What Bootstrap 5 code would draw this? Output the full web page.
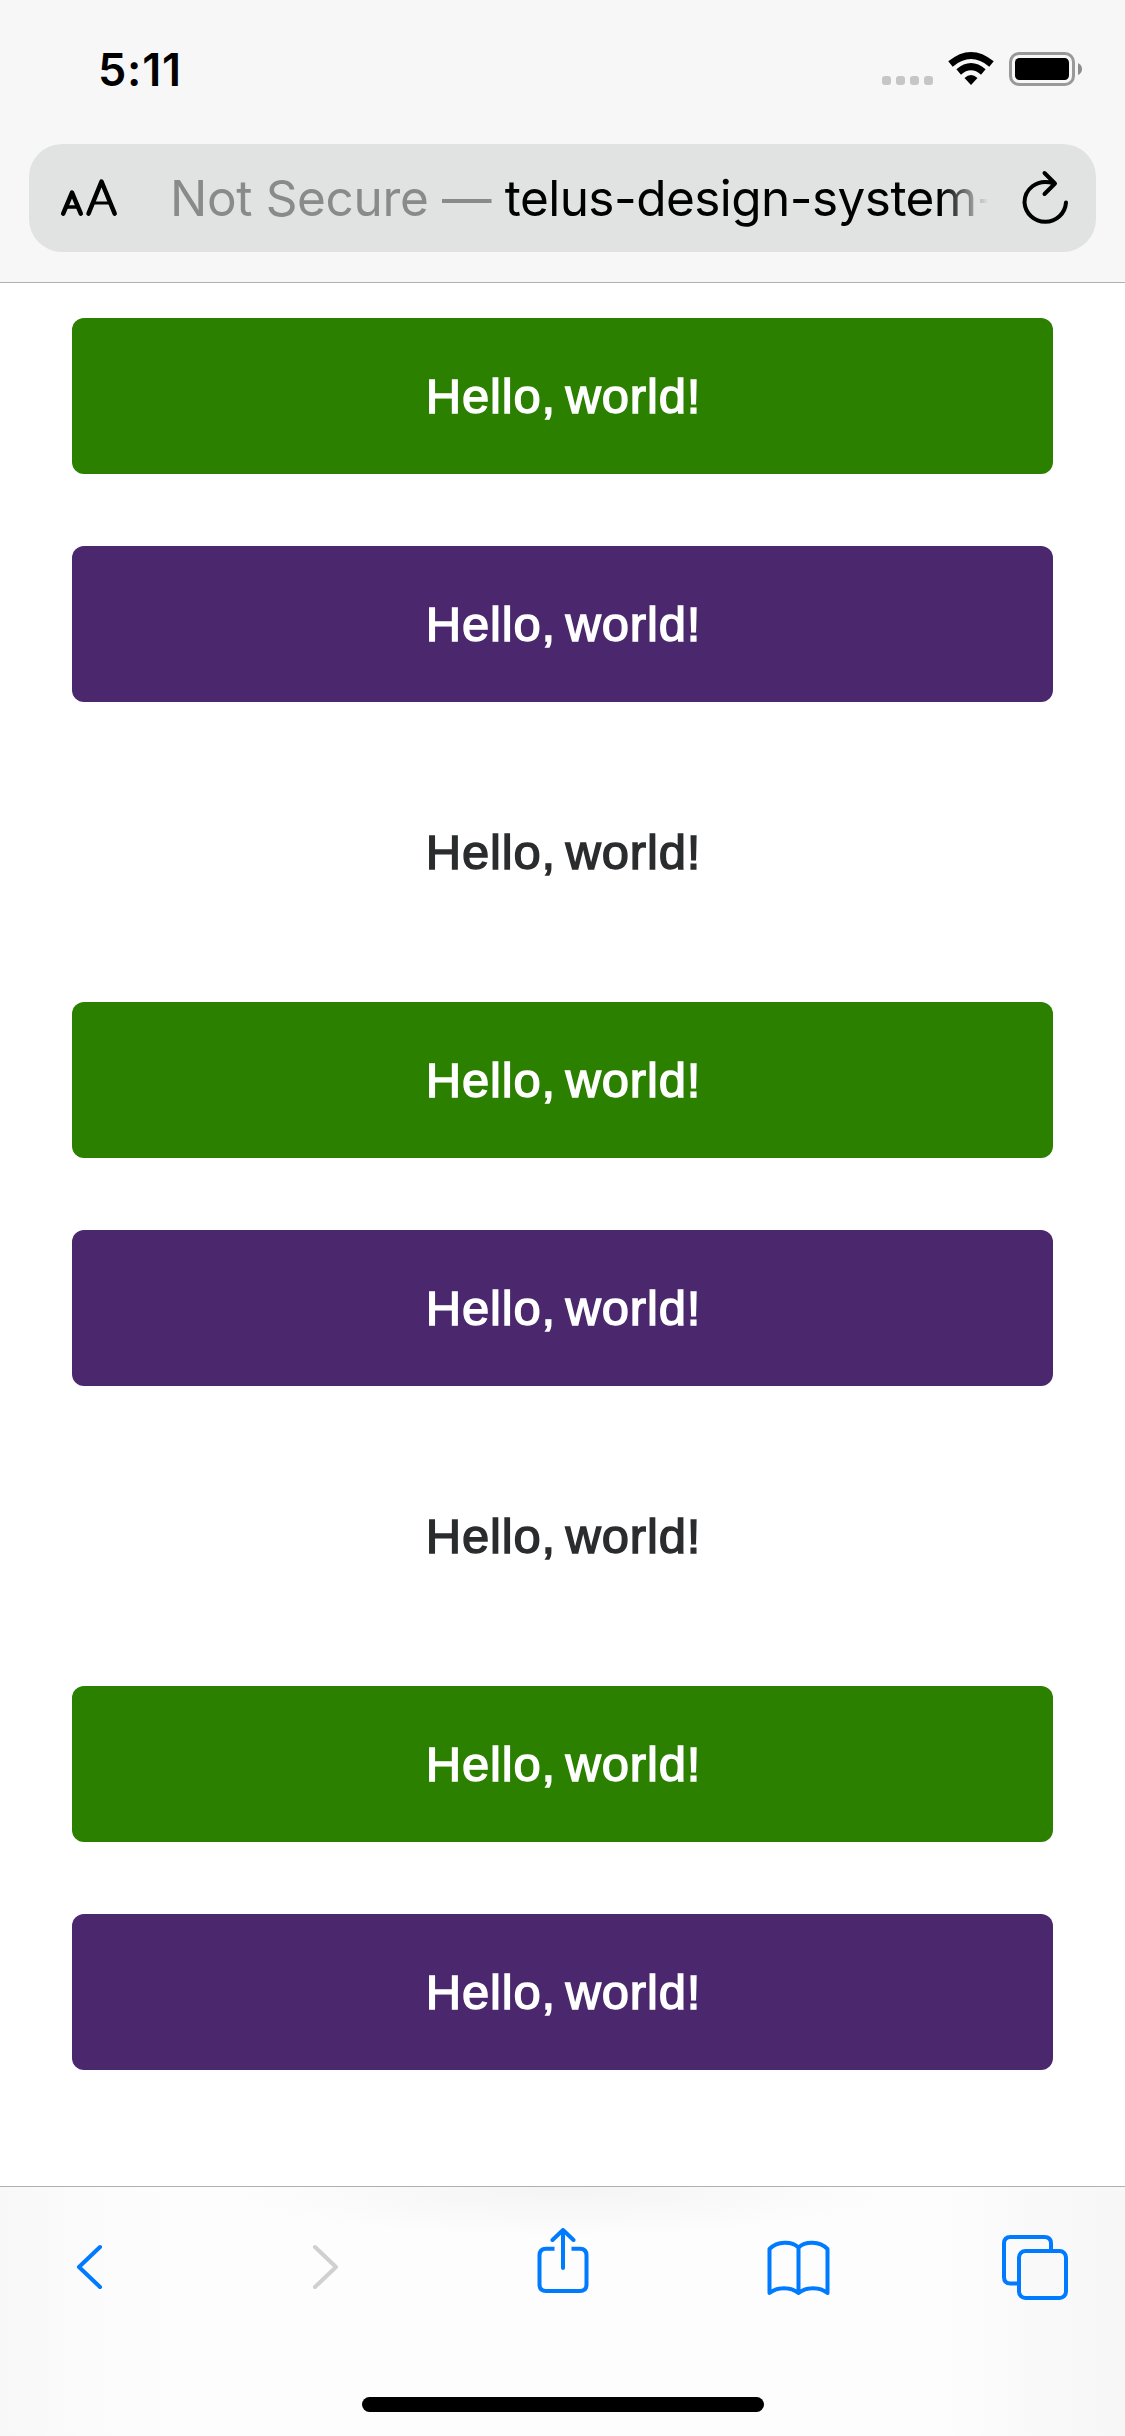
<!DOCTYPE html>
<html lang="en">
<head>
<meta charset="utf-8">
<meta name="viewport" content="width=device-width, initial-scale=1">
<title>Buttons</title>
<link href="https://cdn.jsdelivr.net/npm/bootstrap@5.3.0/dist/css/bootstrap.min.css" rel="stylesheet">
<style>
  body { font-family: Inter, "Liberation Sans", sans-serif; height: 2436px; overflow: hidden; }
  .top-chrome { background: #f7f7f7; height: 283px; border-bottom: 1px solid #aeb0b2; padding: 0 29px; }
  .status-row { height: 144px; padding: 0 13px 6px 69px; }
  .clock { font-size: 45px; font-weight: 600; line-height: 1; letter-spacing: .8px; }
  .address { background: #e1e3e2; height: 108px; border-radius: 33px; padding: 0 22px 0 31px; }
  .url { font-size: 49.5px; line-height: 108px; width: 842px; margin-left: 52px; white-space: pre;
    -webkit-mask-image: linear-gradient(90deg, #000 772px, transparent 818px); mask-image: linear-gradient(90deg, #000 772px, transparent 818px); }
  .url .host { color: #000; letter-spacing: -.55px; }
  .url .insecure { color: #8a8a8a; letter-spacing: -.35px; }
  .stack { padding: 35px 72px 0; gap: 72px; }
  .ds-btn { height: 156px; border: 0; border-radius: 12px; font: 400 49px/1 "Liberation Sans", sans-serif; letter-spacing: .85px; word-spacing: -5px; -webkit-text-stroke: 1.4px currentColor; padding: 1px 0 0 2px; color: #fff; }
  .ds-primary { background: #2b8000; }
  .ds-secondary { background: #4b286d; }
  .ds-plain { background: #fff; color: #2a2c2e; }
  .bottom-chrome { height: 250px; border-top: 1px solid #aeb0b2; padding: 41px 54px 0;
    background: radial-gradient(ellipse 330px 50px at 50% 0, #f4f4f4, transparent), linear-gradient(90deg, #f8f8f8, #fbfbfb 8%, #fdfdfd 15%, #fdfdfd 84%, #fafafa 90%, #f7f7f7); }
  .bottom-chrome svg { fill: none; stroke: #007aff; stroke-width: 4; stroke-linecap: round; stroke-linejoin: round; }
  .bottom-chrome svg.disabled-icon { stroke: #d0d0d0; }
  .bottom-chrome .butt { stroke-linecap: butt; }
  .home-bar { width: 402px; height: 15px; margin-top: 97px; }
</style>
</head>
<body class="d-flex flex-column bg-white">
<header class="top-chrome flex-shrink-0">
  <div class="status-row d-flex align-items-center justify-content-between">
    <span class="clock text-black">5:11</span>
    <svg width="202" height="40" viewBox="881 49 202 40">
      <g fill="#c6c6c6"><rect x="882" y="76" width="9" height="9" rx="3"/><rect x="896" y="76" width="9" height="9" rx="3"/><rect x="910" y="76" width="9" height="9" rx="3"/><rect x="924" y="76" width="9" height="9" rx="3"/></g>
      <g fill="none" stroke="#000" stroke-width="7"><path d="M950.5 64 Q971 47 991.5 64"/><path d="M958.7 72 Q971 61.300 983.300 72"/></g>
      <path d="M964.500 78 Q971 72 977.500 78 L971 85Z"/>
      <rect x="1010.500" y="53.500" width="63" height="31" rx="8.500" fill="none" stroke="#999" stroke-width="3"/>
      <rect x="1015" y="58" width="54" height="22" rx="4.500"/>
      <path d="M1078 63 Q1082 65 1082 69 Q1082 73 1078 75Z" fill="#8c8c8c"/>
    </svg>
  </div>
  <div class="address d-flex align-items-center">
    <svg class="flex-shrink-0" width="58" height="40" viewBox="60 178 58 40" fill="none" stroke="#000" stroke-linecap="round" stroke-linejoin="round"><path stroke-width="4.500" d="M63.200 213.700L72 192.700L80.800 213.700"/><path stroke-width="3.500" d="M67 207H77"/><path stroke-width="4.500" d="M88.500 213.700L101.500 181.500L114.700 213.700"/><path stroke-width="3" d="M93 203H110.500"/></svg>
    <div class="url flex-shrink-0"><span class="insecure">Not Secure — </span><span class="host">telus-design-system-</span></div>
    <svg class="flex-shrink-0 ms-auto" width="54" height="60" viewBox="1020 168 54 60" fill="none" stroke="#000" stroke-width="4" stroke-linecap="round" stroke-linejoin="round"><path d="M1053.500 183.200C1036 178 1024.500 190 1024.500 202.500A20.800 20.800 0 0 0 1066 202.500M1044.500 173L1055 183.500L1044.500 194"/></svg>
  </div>
</header>
<main class="stack d-flex flex-column flex-grow-1">
  <button class="btn ds-btn ds-primary" type="button">Hello, world!</button>
  <button class="btn ds-btn ds-secondary" type="button">Hello, world!</button>
  <button class="btn ds-btn ds-plain" type="button">Hello, world!</button>
  <button class="btn ds-btn ds-primary" type="button">Hello, world!</button>
  <button class="btn ds-btn ds-secondary" type="button">Hello, world!</button>
  <button class="btn ds-btn ds-plain" type="button">Hello, world!</button>
  <button class="btn ds-btn ds-primary" type="button">Hello, world!</button>
  <button class="btn ds-btn ds-secondary" type="button">Hello, world!</button>
</main>
<footer class="bottom-chrome flex-shrink-0">
  <nav class="d-flex justify-content-between">
    <svg width="72" height="72" viewBox="54 2228 72 72"><path d="M100 2247L79 2267L100 2287"/></svg>
    <svg class="disabled-icon" width="72" height="72" viewBox="290 2228 72 72"><path d="M315 2247L336 2267L315 2287"/></svg>
    <svg width="72" height="72" viewBox="526.500 2228 72 72"><path class="butt" d="M554 2248.800H545.500Q539 2248.800 539 2255.500V2284.500Q539 2291 545.500 2291H579.500Q586 2291 586 2284.500V2255.500Q586 2248.800 579.500 2248.800H571"/><path d="M562.500 2268V2230.500M552 2240L562.500 2230L573 2240"/></svg>
    <svg width="72" height="72" viewBox="762.500 2228 72 72"><path d="M798 2247.500C791 2241 777 2241 769 2249V2293C777 2286.500 790 2286.500 798 2293C806 2286.500 819 2286.500 827 2293V2249C819 2241 805 2241 798 2247.500V2293"/></svg>
    <svg width="72" height="72" viewBox="999 2228 72 72"><path d="M1017 2283.500H1010.500Q1004 2283.500 1004 2277V2243.500Q1004 2237 1010.500 2237H1044.500Q1051 2237 1051 2243.500V2250"/><rect x="1019" y="2251" width="47" height="47" rx="6.500"/></svg>
  </nav>
  <div class="home-bar bg-black rounded-pill mx-auto"></div>
</footer>
<script src="https://cdn.jsdelivr.net/npm/bootstrap@5.3.0/dist/js/bootstrap.bundle.min.js"></script>
</body>
</html>
